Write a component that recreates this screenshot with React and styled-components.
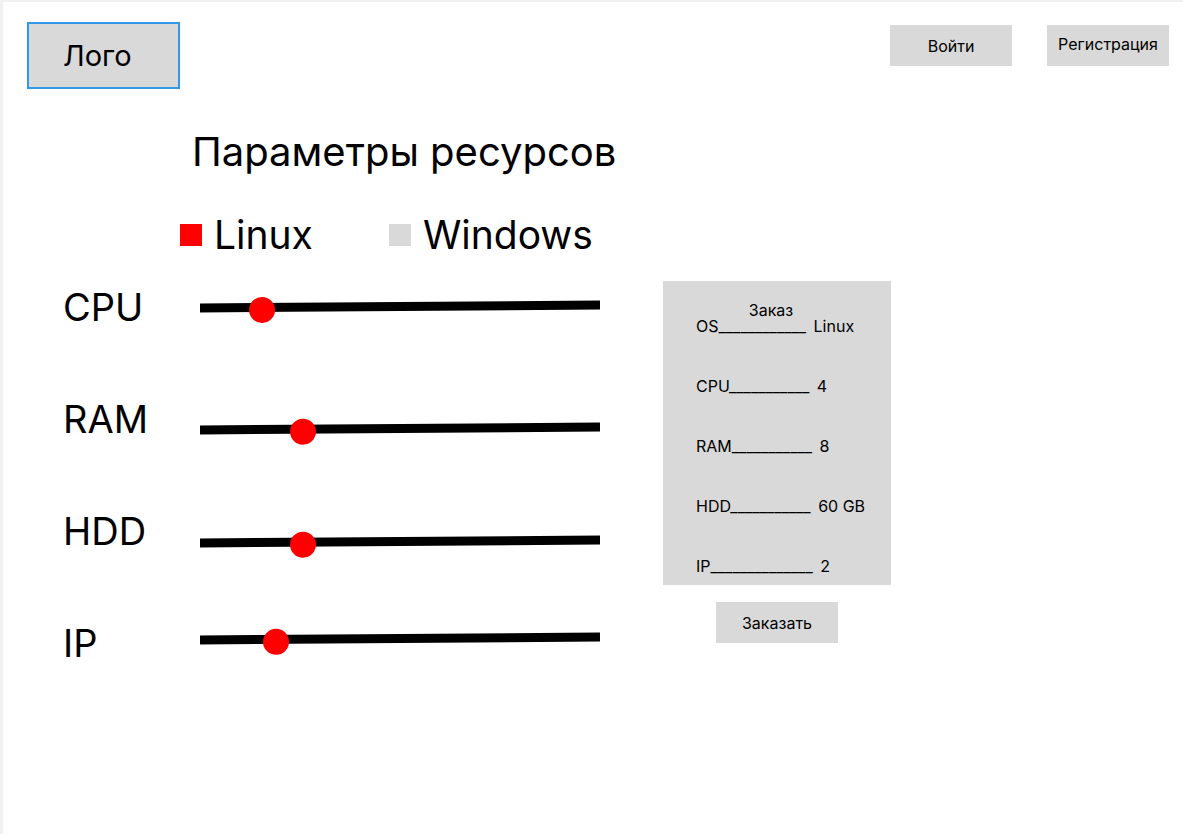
import styled, { createGlobalStyle } from "styled-components";

const GlobalStyle = createGlobalStyle`
* { box-sizing: border-box; }
body {
    margin: 0;
    font-family: Inter, "Noto Sans", sans-serif;
    color: #000;
    background: #fff;
}
`

const Page = styled.div`
width: 1183px;
height: 834px;
border-top: 2px solid #f1f1f1;
border-left: 3px solid #f1f1f1;
overflow: hidden;
`

const Header = styled.header`
display: flex;
justify-content: space-between;
align-items: flex-start;
padding: 20px 14px 0 24px;
`

const Logo = styled.div`
width: 153px;
height: 67px;
display: flex;
align-items: center;
padding-left: 34px;
background: #d9d9d9;
border: 2px solid #3399e6;
font-size: 29px;
`

const AuthButtons = styled.div`
display: flex;
gap: 35px;
margin-top: 3px;
`

const GreyButton = styled.button`
width: 122px;
height: 41px;
border: none;
background: #d9d9d9;
font-family: inherit;
font-size: 16px;
color: #000;
padding: 0 0 ${p => p.$lift || 0}px;
cursor: pointer;
`

const Main = styled.main`
display: flex;
align-items: flex-start;
`

const Params = styled.section`
width: 660px;
`

const Title = styled.h1`
margin: 39px 0 0 189px;
font-size: 40px;
font-weight: 400;
line-height: 48px;
`

const OsList = styled.div`
display: flex;
gap: 76px;
margin: 35px 0 0 177px;
`

const OsOption = styled.div`
display: flex;
align-items: center;
gap: 12px;
font-size: 39px;
line-height: 48px;
`

const Square = styled.span`
width: 22px;
height: 22px;
background: ${p => (p.$active ? "#ff0000" : "#d9d9d9")};
`

const Sliders = styled.div`
display: flex;
flex-direction: column;
gap: 72px;
margin: 28px 0 0 60px;
`

const SliderRow = styled.div`
display: flex;
align-items: center;
height: 40px;
`

const Label = styled.div`
width: 137px;
font-size: 38px;
line-height: 40px;
`

const Track = styled.div`
position: relative;
width: 400px;
height: 9px;
background: #000;
transform: translateY(${p => p.$dy}px) rotate(-0.4deg);
`

const Thumb = styled.span`
position: absolute;
top: 50%;
width: 26px;
height: 26px;
margin: -11px 0 0 -13px;
border-radius: 50%;
background: #ff0000;
`

const OrderColumn = styled.aside`
display: flex;
flex-direction: column;
align-items: center;
margin-top: 192px;
gap: 17px;
`

const OrderPanel = styled.div`
width: 228px;
height: 304px;
background: #d9d9d9;
padding: 21px 0 0 33px;
font-size: 16px;
`

const OrderTitle = styled.div`
width: 150px;
text-align: center;
line-height: 16px;
`

const OrderLine = styled.div`
line-height: 16px;
margin-bottom: 44px;
white-space: pre;
`

const Value = styled.span`
margin-left: 3px;
`

const sliders = [
    { name: "CPU", pos: 15.5, dy: -1 },
    { name: "RAM", pos: 25.8, dy: 9 },
    { name: "HDD", pos: 25.8, dy: 10 },
    { name: "IP", pos: 19, dy: -5 },
];

const order = [
    ["OS____________", "Linux"],
    ["CPU___________", "4"],
    ["RAM___________", "8"],
    ["HDD___________", "60 GB"],
    ["IP______________", "2"],
];

export default function App() {
    return (
        <>
            <GlobalStyle />
            <Page>
                <Header>
                    <Logo>Лого</Logo>
                    <AuthButtons>
                        <GreyButton>Войти</GreyButton>
                        <GreyButton $lift={4}>Регистрация</GreyButton>
                    </AuthButtons>
                </Header>
                <Main>
                    <Params>
                        <Title>Параметры ресурсов</Title>
                        <OsList>
                            <OsOption><Square $active />Linux</OsOption>
                            <OsOption><Square />Windows</OsOption>
                        </OsList>
                        <Sliders>
                            {sliders.map(s => (
                                <SliderRow key={s.name}>
                                    <Label>{s.name}</Label>
                                    <Track $dy={s.dy}>
                                        <Thumb style={{ left: `${s.pos}%` }} />
                                    </Track>
                                </SliderRow>
                            ))}
                        </Sliders>
                    </Params>
                    <OrderColumn>
                        <OrderPanel>
                            <OrderTitle>Заказ</OrderTitle>
                            {order.map(([key, value]) => (
                                <OrderLine key={key}>{key} <Value>{value}</Value></OrderLine>
                            ))}
                        </OrderPanel>
                        <GreyButton>Заказать</GreyButton>
                    </OrderColumn>
                </Main>
            </Page>
        </>
    )
}
